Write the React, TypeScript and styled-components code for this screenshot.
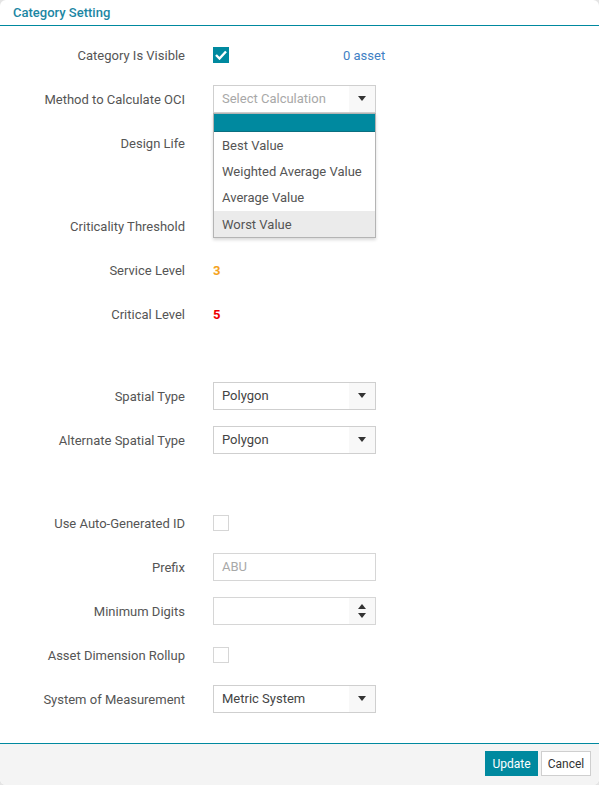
import styled, { createGlobalStyle } from "styled-components";

const teal = "#00899f";

const GlobalStyle = createGlobalStyle`
  html, body {
    margin: 0;
    padding: 0;
    background: #e4e4e4;
    font-family: Roboto, "Noto Sans", sans-serif;
    font-size: 13px;
  }
`

const Dialog = styled.div`
  width: 599px;
  height: 785px;
  box-sizing: border-box;
  display: flex;
  flex-direction: column;
  background: #fff;
  border-radius: 6px;
  overflow: hidden;
`

const Header = styled.div`
  height: 25px;
  flex-shrink: 0;
  display: flex;
  align-items: center;
  padding-left: 13px;
  border-bottom: 1px solid ${teal};
  color: #1b86a3;
  font-weight: 500;
  font-size: 13px;
`

const Body = styled.div`
  flex: 1;
  padding-top: 7px;
`

const Row = styled.div<{ $space?: number }>`
  height: 44px;
  display: grid;
  grid-template-columns: 185px 163px auto;
  column-gap: 28px;
  align-items: center;
  margin-top: ${p => p.$space ?? 0}px;
`

const Label = styled.div`
  text-align: right;
  color: #555;
`

const Control = styled.div`
  position: relative;
  display: flex;
  align-items: center;
  height: 28px;
`

const Value = styled.span<{ $color: string }>`
  color: ${p => p.$color};
  font-weight: 700;
`

const AssetLink = styled.span`
  color: #3f7fc4;
  margin-left: -61px;
`

const Check = styled.span<{ $on?: boolean }>`
  width: 16px;
  height: 16px;
  box-sizing: border-box;
  display: inline-flex;
  align-items: center;
  justify-content: center;
  background: ${p => (p.$on ? teal : "#fff")};
  border: 1px solid ${p => (p.$on ? teal : "#d6d6d6")};
`

const Select = styled.div<{ $placeholder?: boolean }>`
  width: 163px;
  height: 28px;
  margin-top: -1px;
  box-sizing: border-box;
  border: 1px solid #cfcfcf;
  display: flex;
  align-items: stretch;
  color: ${p => (p.$placeholder ? "#a8a8a8" : "#444")};
  background: #fff;
`

const SelectText = styled.div`
  flex: 1;
  display: flex;
  align-items: center;
  padding-left: 8px;
`

const Arrow = styled.div<{ $spin?: boolean }>`
  width: 26px;
  display: flex;
  flex-direction: column;
  align-items: center;
  justify-content: center;
  gap: ${p => (p.$spin ? 4 : 2)}px;
  background: #f8f8f8;
`

const Input = styled.div`
  width: 163px;
  height: 28px;
  margin-top: -1px;
  box-sizing: border-box;
  border: 1px solid #d6d6d6;
  display: flex;
  align-items: stretch;
  color: #a8a8a8;
`

const Menu = styled.ul`
  position: absolute;
  top: 28px;
  left: 0;
  width: 163px;
  box-sizing: border-box;
  margin: 0;
  padding: 0;
  list-style: none;
  background: #fff;
  border: 1px solid #b4b4b4;
  box-shadow: 0 2px 3px rgba(0, 0, 0, 0.15);
  z-index: 2;
`

const MenuItem = styled.li<{ $active?: boolean; $hover?: boolean }>`
  height: ${p => (p.$active ? 17 : 26.3)}px;
  display: flex;
  align-items: center;
  padding-left: 8px;
  color: #555;
  background: ${p => (p.$active ? teal : p.$hover ? "#ebebeb" : "#fff")};
  border-bottom: ${p => (p.$active ? "1px solid #0b6f80" : "none")};
`

const Footer = styled.div`
  height: 42px;
  flex-shrink: 0;
  box-sizing: border-box;
  border-top: 1px solid ${teal};
  background: #f4f4f4;
  display: flex;
  justify-content: flex-end;
  align-items: flex-start;
  gap: 3px;
  padding: 7px 8px 0 0;
`

const Button = styled.button<{ $primary?: boolean }>`
  height: 25px;
  width: ${p => (p.$primary ? 53 : 50)}px;
  padding: 0;
  font-family: Roboto, sans-serif;
  font-size: 12px;
  border: 1px solid ${p => (p.$primary ? teal : "#cfcfcf")};
  background: ${p => (p.$primary ? teal : "#fff")};
  color: ${p => (p.$primary ? "#fff" : "#333")};
`

const Tri = ({ up }: { up?: boolean }) => (
  <svg width="8" height="5" viewBox="0 0 8 5">
    <path d={up ? "M0 5 L4 0 L8 5 Z" : "M0 0 L8 0 L4 5 Z"} fill="#333" />
  </svg>
)

const Dropdown = ({ text, placeholder }: { text: string; placeholder?: boolean }) => (
  <Select $placeholder={placeholder}>
    <SelectText>{text}</SelectText>
    <Arrow>
      <Tri />
    </Arrow>
  </Select>
)

const options = ["Best Value", "Weighted Average Value", "Average Value", "Worst Value"]

export default function App() {
  return (
    <>
      <GlobalStyle />
      <Dialog>
        <Header>Category Setting</Header>
        <Body>
          <Row>
            <Label>Category Is Visible</Label>
            <Control>
              <Check $on>
                <svg width="12" height="10" viewBox="0 0 12 10">
                  <path d="M1 5 L4.5 8.5 L11 1.5" stroke="#fff" strokeWidth="2.4" fill="none" />
                </svg>
              </Check>
            </Control>
            <AssetLink>0 asset</AssetLink>
          </Row>
          <Row>
            <Label>Method to Calculate OCI</Label>
            <Control>
              <Dropdown text="Select Calculation" placeholder />
              <Menu>
                <MenuItem $active />
                {options.map((o, i) => (
                  <MenuItem key={o} $hover={i === options.length - 1}>{o}</MenuItem>
                ))}
              </Menu>
            </Control>
          </Row>
          <Row>
            <Label>Design Life</Label>
          </Row>
          <Row $space={39}>
            <Label>Criticality Threshold</Label>
          </Row>
          <Row>
            <Label>Service Level</Label>
            <Control><Value $color="#f5a31c">3</Value></Control>
          </Row>
          <Row>
            <Label>Critical Level</Label>
            <Control><Value $color="#ee0000">5</Value></Control>
          </Row>
          <Row $space={38}>
            <Label>Spatial Type</Label>
            <Control><Dropdown text="Polygon" /></Control>
          </Row>
          <Row>
            <Label>Alternate Spatial Type</Label>
            <Control><Dropdown text="Polygon" /></Control>
          </Row>
          <Row $space={39}>
            <Label>Use Auto-Generated ID</Label>
            <Control><Check /></Control>
          </Row>
          <Row>
            <Label>Prefix</Label>
            <Control>
              <Input><SelectText>ABU</SelectText></Input>
            </Control>
          </Row>
          <Row>
            <Label>Minimum Digits</Label>
            <Control>
              <Input>
                <SelectText />
                <Arrow $spin>
                  <Tri up />
                  <Tri />
                </Arrow>
              </Input>
            </Control>
          </Row>
          <Row>
            <Label>Asset Dimension Rollup</Label>
            <Control><Check /></Control>
          </Row>
          <Row>
            <Label>System of Measurement</Label>
            <Control><Dropdown text="Metric System" /></Control>
          </Row>
        </Body>
        <Footer>
          <Button $primary>Update</Button>
          <Button>Cancel</Button>
        </Footer>
      </Dialog>
    </>
  )
}
